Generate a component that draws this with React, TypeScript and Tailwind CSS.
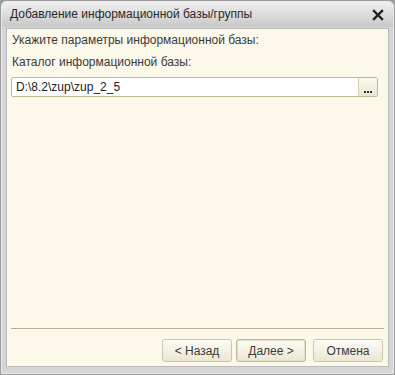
import React from "react"

function Btn({ label, active, className }: { label: string; active?: boolean; className?: string }) {
    return (
        <button
            className={
                "h-[23px] w-[70px] rounded-[3px] border text-[12px] text-[#3a3a3a] bg-gradient-to-b from-[#fdfcf5] to-[#ebe7d3] " +
                (active ? "border-[#bdb89a] shadow-[inset_0_0_0_1px_#e3dfc6] " : "border-[#c9c5ae] ") +
                (className || "")
            }
        >
            {label}
        </button>
    )
}

export default function App() {
    return (
        <div
            className="w-[395px] h-[375px] bg-[#9d9d9d] p-px"
            style={{ fontFamily: '"Liberation Sans", Arial, sans-serif' }}
        >
            <div className="w-full h-full flex flex-col bg-[#d6d6d6] border border-[#e9e9e9] rounded-t-[5px]">
                <div className="h-[25px] flex items-center justify-between pl-[8px] pr-[9px] bg-gradient-to-b from-[#efefef] to-[#c9c9c9] rounded-t-[4px]">
                    <span className="text-[12px] text-[#2a2a2a] mt-[-1px]">Добавление информационной базы/группы</span>
                    <svg width="12" height="12" viewBox="0 0 12 12">
                        <path d="M2 2 L10 10 M10 2 L2 10" stroke="#222" strokeWidth="2.4" strokeLinecap="square" />
                    </svg>
                </div>
                <div className="flex-1 mx-[4px] mb-[6px] mt-[1px] bg-[#fcf9ea] border border-[#b9b9b9] flex flex-col px-[4px]">
                    <div className="text-[12px] text-[#3a3a3a] mt-[2px] ml-px">Укажите параметры информационной базы:</div>
                    <div className="text-[12px] text-[#3a3a3a] mt-[4px] ml-px">Каталог информационной базы:</div>
                    <div className="mt-[6px] h-[20px] flex border border-[#bdb89a] rounded-[2px] bg-white mr-[6px]">
                        <div className="flex-1 text-[12px] text-[#222] leading-[18px] pl-[4px]">D:\8.2\zup\zup_2_5</div>
                        <div className="w-[19px] bg-gradient-to-b from-[#fbfaf2] to-[#e9e5cf] border-l border-[#d6d2b8] flex items-end justify-center pb-[3px]">
                            <div className="flex gap-[1px]">
                                <div className="w-[2px] h-[2px] bg-[#333]" />
                                <div className="w-[2px] h-[2px] bg-[#333]" />
                                <div className="w-[2px] h-[2px] bg-[#333]" />
                            </div>
                        </div>
                    </div>
                    <div className="flex-1" />
                    <div className="h-px bg-[#b3ae98] mb-[10px]" />
                    <div className="flex justify-end mb-[4px] pr-[1px]">
                        <Btn label="< Назад" />
                        <Btn label="Далее >" active className="ml-[4px]" />
                        <Btn label="Отмена" className="ml-[7px]" />
                    </div>
                </div>
            </div>
        </div>
    )
}
